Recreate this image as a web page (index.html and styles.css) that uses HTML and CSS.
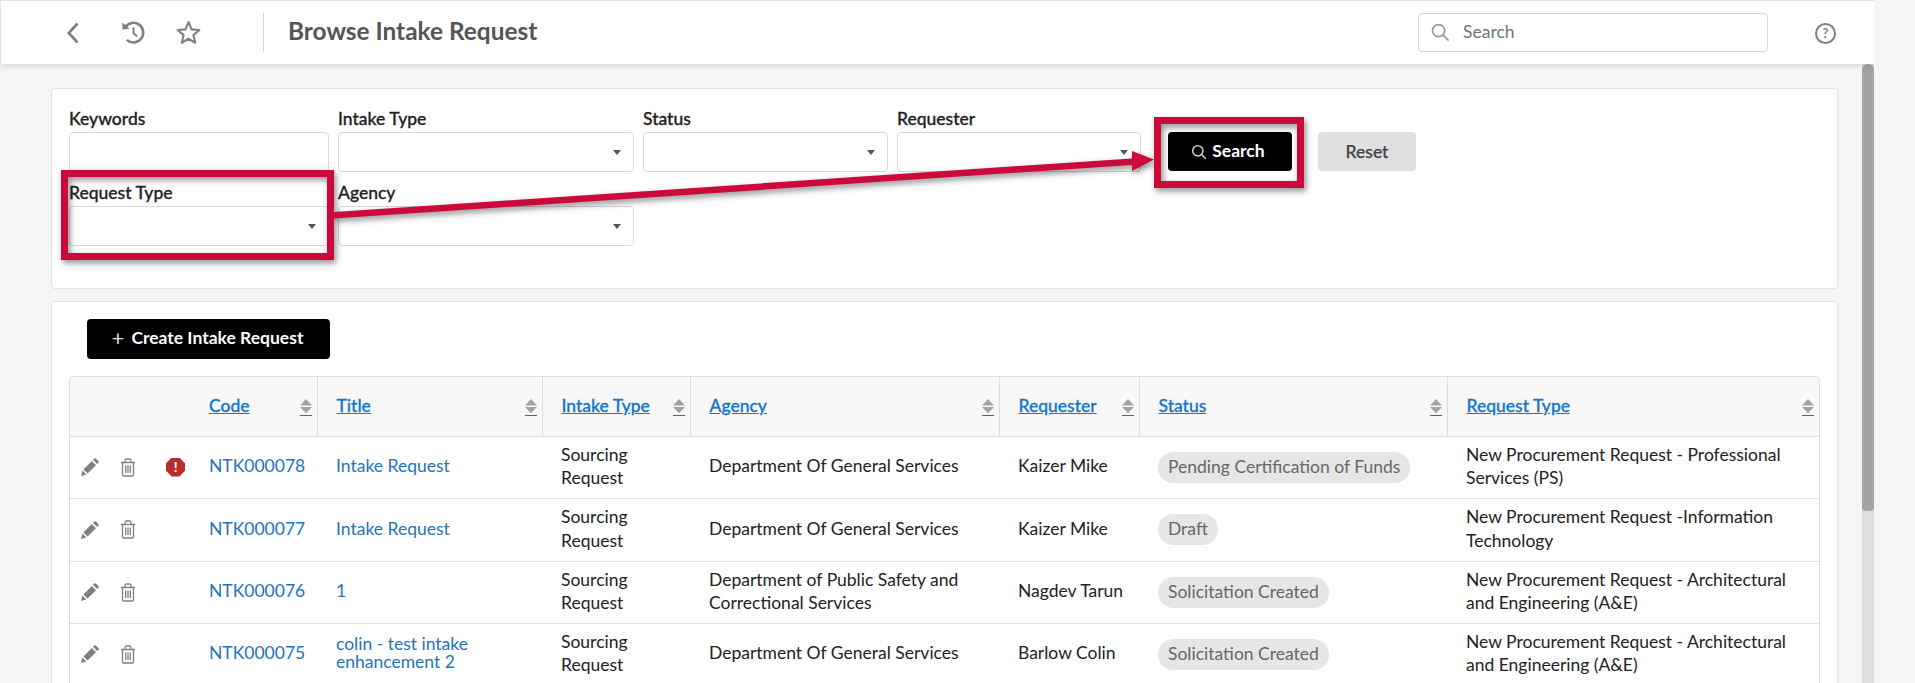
FILE: index.html
```html
<!DOCTYPE html>
<html lang="en">
<head>
<meta charset="utf-8">
<title>Browse Intake Request</title>
<link rel="stylesheet" href="styles.css">
</head>
<body>
<div class="shell">
  <header class="topbar">
    <div class="nav-icons">
      <svg class="ic-back" viewBox="0 0 12 22"><polyline points="10.5,1.5 1.8,11 10.5,20.5"/></svg>
      <svg class="ic-history" viewBox="0 0 26 26"><path class="ln" d="M4.6 7.2A10.2 10.2 0 1 1 6 20.6"/><path class="fl" d="M1.4 2.6L1.6 10 9 9.2Z"/><polyline class="ln thin" points="13,7.5 13,14 17,17"/></svg>
      <svg class="ic-star" viewBox="0 0 24 24"><polygon points="12,2 14.9,9 22.4,9.6 16.7,14.5 18.5,21.9 12,18 5.5,21.9 7.3,14.5 1.6,9.6 9.1,9"/></svg>
    </div>
    <div class="divider"></div>
    <h1 class="page-title">Browse Intake Request</h1>
    <div class="global-search">
      <svg class="ic-mag" viewBox="0 0 20 20"><circle cx="8" cy="8" r="6.4"/><line x1="12.6" y1="12.6" x2="18.6" y2="18.6"/></svg>
      <span class="placeholder">Search</span>
    </div>
    <span class="help">?</span>
  </header>

  <div class="body-row">
    <main class="content">
      <section class="card filters">
        <div class="field"><label>Keywords</label><div class="control"></div></div>
        <div class="field"><label>Intake Type</label><div class="control select"><i class="caret"></i></div></div>
        <div class="field"><label>Status</label><div class="control select"><i class="caret"></i></div></div>
        <div class="field"><label>Requester</label><div class="control select"><i class="caret"></i></div></div>
        <div class="actions">
          <button class="btn btn-dark btn-search"><svg class="ic-mag-sm" viewBox="0 0 20 20"><circle cx="8.5" cy="8.5" r="6.4"/><line x1="13" y1="13" x2="18.5" y2="18.5"/></svg>Search</button>
          <button class="btn btn-light">Reset</button>
        </div>
        <div class="field"><label>Request Type</label><div class="control select"><i class="caret"></i></div></div>
        <div class="field"><label>Agency</label><div class="control select"><i class="caret"></i></div></div>
      </section>

      <section class="card results">
        <button class="btn btn-dark btn-create"><span class="plus">+</span>Create Intake Request</button>
        <div class="table-wrap">
          <table>
            <colgroup>
              <col class="c-icons"><col class="c-code"><col class="c-title"><col class="c-intake"><col class="c-agency"><col class="c-req"><col class="c-status"><col class="c-type">
            </colgroup>
            <thead>
              <tr>
                <th class="blank"></th>
                <th><div class="th-in"><a>Code</a><svg class="sort" viewBox="0 0 12 17"><path d="M6 0L12 6.5H0Z"/><path d="M0 8H12L6 14.2Z"/><rect class="u" y="16" width="12" height="1"/></svg></div></th>
                <th><div class="th-in"><a>Title</a><svg class="sort" viewBox="0 0 12 17"><path d="M6 0L12 6.5H0Z"/><path d="M0 8H12L6 14.2Z"/><rect class="u" y="16" width="12" height="1"/></svg></div></th>
                <th><div class="th-in"><a>Intake Type</a><svg class="sort" viewBox="0 0 12 17"><path d="M6 0L12 6.5H0Z"/><path d="M0 8H12L6 14.2Z"/><rect class="u" y="16" width="12" height="1"/></svg></div></th>
                <th><div class="th-in"><a>Agency</a><svg class="sort" viewBox="0 0 12 17"><path d="M6 0L12 6.5H0Z"/><path d="M0 8H12L6 14.2Z"/><rect class="u" y="16" width="12" height="1"/></svg></div></th>
                <th><div class="th-in"><a>Requester</a><svg class="sort" viewBox="0 0 12 17"><path d="M6 0L12 6.5H0Z"/><path d="M0 8H12L6 14.2Z"/><rect class="u" y="16" width="12" height="1"/></svg></div></th>
                <th><div class="th-in"><a>Status</a><svg class="sort" viewBox="0 0 12 17"><path d="M6 0L12 6.5H0Z"/><path d="M0 8H12L6 14.2Z"/><rect class="u" y="16" width="12" height="1"/></svg></div></th>
                <th class="last"><div class="th-in"><a>Request Type</a><svg class="sort" viewBox="0 0 12 17"><path d="M6 0L12 6.5H0Z"/><path d="M0 8H12L6 14.2Z"/><rect class="u" y="16" width="12" height="1"/></svg></div></th>
              </tr>
            </thead>
            <tbody>
              <tr class="r62">
                <td class="icons"><div class="icon-row">
                  <svg class="ic-pencil" viewBox="0 0 18 18"><path d="M0 18L1.4 12.6 5.4 16.6Z"/><path d="M2.4 11.4L10.8 3 15 7.2 6.6 15.6Z"/><path d="M12 1.8L13.2.6Q14-.2 14.9.6L17.4 3.1Q18.2 4 17.4 4.8L16.2 6Z"/></svg>
                  <svg class="ic-trash" viewBox="0 0 16 19"><path d="M1 4.5H15M5 4.5V2.4Q5 1 6.4 1H9.6Q11 1 11 2.4V4.5M2.5 4.5V16.4Q2.5 18 4 18H12Q13.5 18 13.5 16.4V4.5M5.7 7.5V15M8 7.5V15M10.3 7.5V15"/></svg>
                  <span class="err">!</span>
                </div></td>
                <td><a>NTK000078</a></td>
                <td><a>Intake Request</a></td>
                <td>Sourcing Request</td>
                <td>Department Of General Services</td>
                <td>Kaizer Mike</td>
                <td><span class="pill">Pending Certification of Funds</span></td>
                <td>New Procurement Request - Professional Services (PS)</td>
              </tr>
              <tr class="r63">
                <td class="icons"><div class="icon-row">
                  <svg class="ic-pencil" viewBox="0 0 18 18"><path d="M0 18L1.4 12.6 5.4 16.6Z"/><path d="M2.4 11.4L10.8 3 15 7.2 6.6 15.6Z"/><path d="M12 1.8L13.2.6Q14-.2 14.9.6L17.4 3.1Q18.2 4 17.4 4.8L16.2 6Z"/></svg>
                  <svg class="ic-trash" viewBox="0 0 16 19"><path d="M1 4.5H15M5 4.5V2.4Q5 1 6.4 1H9.6Q11 1 11 2.4V4.5M2.5 4.5V16.4Q2.5 18 4 18H12Q13.5 18 13.5 16.4V4.5M5.7 7.5V15M8 7.5V15M10.3 7.5V15"/></svg>
                </div></td>
                <td><a>NTK000077</a></td>
                <td><a>Intake Request</a></td>
                <td>Sourcing Request</td>
                <td>Department Of General Services</td>
                <td>Kaizer Mike</td>
                <td><span class="pill">Draft</span></td>
                <td>New Procurement Request -Information Technology</td>
              </tr>
              <tr class="r62">
                <td class="icons"><div class="icon-row">
                  <svg class="ic-pencil" viewBox="0 0 18 18"><path d="M0 18L1.4 12.6 5.4 16.6Z"/><path d="M2.4 11.4L10.8 3 15 7.2 6.6 15.6Z"/><path d="M12 1.8L13.2.6Q14-.2 14.9.6L17.4 3.1Q18.2 4 17.4 4.8L16.2 6Z"/></svg>
                  <svg class="ic-trash" viewBox="0 0 16 19"><path d="M1 4.5H15M5 4.5V2.4Q5 1 6.4 1H9.6Q11 1 11 2.4V4.5M2.5 4.5V16.4Q2.5 18 4 18H12Q13.5 18 13.5 16.4V4.5M5.7 7.5V15M8 7.5V15M10.3 7.5V15"/></svg>
                </div></td>
                <td><a>NTK000076</a></td>
                <td><a>1</a></td>
                <td>Sourcing Request</td>
                <td>Department of Public Safety and Correctional Services</td>
                <td>Nagdev Tarun</td>
                <td><span class="pill">Solicitation Created</span></td>
                <td>New Procurement Request - Architectural and Engineering (A&amp;E)</td>
              </tr>
              <tr class="r62">
                <td class="icons"><div class="icon-row">
                  <svg class="ic-pencil" viewBox="0 0 18 18"><path d="M0 18L1.4 12.6 5.4 16.6Z"/><path d="M2.4 11.4L10.8 3 15 7.2 6.6 15.6Z"/><path d="M12 1.8L13.2.6Q14-.2 14.9.6L17.4 3.1Q18.2 4 17.4 4.8L16.2 6Z"/></svg>
                  <svg class="ic-trash" viewBox="0 0 16 19"><path d="M1 4.5H15M5 4.5V2.4Q5 1 6.4 1H9.6Q11 1 11 2.4V4.5M2.5 4.5V16.4Q2.5 18 4 18H12Q13.5 18 13.5 16.4V4.5M5.7 7.5V15M8 7.5V15M10.3 7.5V15"/></svg>
                </div></td>
                <td><a>NTK000075</a></td>
                <td><a class="tight">colin - test intake enhancement 2</a></td>
                <td>Sourcing Request</td>
                <td>Department Of General Services</td>
                <td>Barlow Colin</td>
                <td><span class="pill">Solicitation Created</span></td>
                <td>New Procurement Request - Architectural and Engineering (A&amp;E)</td>
              </tr>
            </tbody>
          </table>
        </div>
      </section>
    </main>
    <div class="scrollbar"><div class="thumb"></div></div>
  </div>
</div>

<svg class="annotations" viewBox="0 0 1915 683" width="1915" height="683">
  <g class="marks">
    <rect x="64.5" y="173.5" width="266" height="83"/>
    <rect x="1157.5" y="120.5" width="143" height="64"/>
    <polygon class="arrow" points="334,212 1132,158.5 1132,151 1154,159.5 1132,171 1132,165 334,218.5"/>
  </g>
</svg>
</body>
</html>
```
FILE: styles.css
```css
* { box-sizing: border-box; }
html, body { margin: 0; height: 683px; overflow: hidden; }
body {
  background: #f5f5f5;
  font-family: Lato, "Open Sans", sans-serif;
  font-size: 17.5px;
  color: #222;
}
.shell { width: 1874px; height: 683px; display: flex; flex-direction: column; overflow: hidden; }

/* top bar */
.topbar {
  position: relative;
  z-index: 2;
  flex: none;
  height: 64px;
  display: flex;
  align-items: center;
  background: #fff;
  border-top: 1px solid #e3e3e3;
  border-left: 1px solid #e3e3e3;
  box-shadow: 0 2px 6px rgba(0, 0, 0, .13);
}
.nav-icons { display: flex; align-items: center; width: 262px; padding-left: 66px; }
.ic-back { width: 12px; height: 22px; margin-right: 42px; }
.ic-back polyline { fill: none; stroke: #7f7f7f; stroke-width: 2.6; }
.ic-history { width: 25px; height: 25px; margin-right: 30px; }
.ic-history .ln { fill: none; stroke: #7f7f7f; stroke-width: 2.6; }
.ic-history .thin { stroke-width: 2; }
.ic-history .fl { fill: #7f7f7f; }
.ic-star { width: 25px; height: 25px; }
.ic-star polygon { fill: none; stroke: #7f7f7f; stroke-width: 2; stroke-linejoin: round; }
.divider { width: 1px; height: 39px; background: #d4d4d4; }
.page-title { margin: 0 0 0 24px; flex: 1; font-size: 24.4px; font-weight: 700; color: #555; line-height: 30px; position: relative; top: -2px; }
.global-search {
  width: 350px;
  height: 39px;
  display: flex;
  align-items: center;
  padding-left: 12px;
  border: 1px solid #d6d6d6;
  border-radius: 4px;
  margin-right: 47px;
}
.ic-mag { width: 19px; height: 19px; margin-right: 13px; }
.ic-mag circle, .ic-mag line { fill: none; stroke: #999; stroke-width: 1.8; }
.placeholder { color: #6c757d; position: relative; top: -1px; }
.help {
  width: 21px;
  height: 21px;
  margin-right: 38px;
  border: 2px solid #7f7f7f;
  border-radius: 50%;
  color: #7f7f7f;
  font-size: 13px;
  font-weight: 700;
  line-height: 17px;
  text-align: center;
  position: relative;
  top: 1px;
}

/* body */
.body-row { flex: 1; min-height: 0; display: flex; }
.content { flex: 1; min-width: 0; padding: 24px 24px 0 51px; overflow: hidden; }
.scrollbar { width: 12px; background: #dedede; flex: none; }
.thumb { height: 447px; background: #a4a4a4; border-radius: 6px 6px 4px 4px; }

.card { background: #fff; border: 1px solid #e2e2e2; border-radius: 4px; }

/* filters */
.filters {
  height: 201px;
  padding: 21px 0 0 17px;
  display: grid;
  grid-template-columns: 260px 296px 245px 244px auto;
  grid-auto-rows: 74px;
  column-gap: 9px;
  justify-content: start;
}
.field label { display: block; height: 22px; line-height: 18px; font-weight: 500; color: #222; -webkit-text-stroke: .3px #222; }
.control { height: 40px; border: 1px solid #d8d8d8; border-radius: 4px; background: #fff; }
.select { display: flex; align-items: center; justify-content: flex-end; padding-right: 12px; }
.caret { width: 0; height: 0; border: 4.5px solid transparent; border-top: 5px solid #555; border-bottom: 0; }
.actions { display: flex; align-items: flex-start; padding: 22px 0 0 18px; gap: 26px; }

.btn {
  font-family: inherit;
  font-size: 17.5px;
  border: 0;
  border-radius: 4px;
  padding: 0;
  display: flex;
  align-items: center;
  justify-content: center;
  height: 39px;
}
.btn-dark { background: #000; color: #fff; font-weight: 700; }
.btn-light { background: #dfe0e2; color: #444; font-weight: 500; width: 98px; padding-bottom: 1px; -webkit-text-stroke: .25px #444; }
.btn-search { width: 124px; padding: 0 4px 2px 0; }
.ic-mag-sm { width: 16px; height: 16px; margin-right: 5px; position: relative; top: 1px; }
.ic-mag-sm circle, .ic-mag-sm line { fill: none; stroke: #c4c4c4; stroke-width: 2; }

/* results */
.results { margin-top: 12px; height: 421px; padding: 17px 0 0 17px; }
.btn-create { width: 243px; height: 40px; margin-left: 18px; padding: 0 2px 3px 0; }
.plus { font-weight: 400; font-size: 22px; color: #ddd; margin-right: 7px; line-height: 20px; }
.table-wrap {
  margin-top: 17px;
  width: 1751px;
  border: 1px solid #dcdcdc;
  border-bottom: 0;
  border-radius: 5px 5px 0 0;
  overflow: hidden;
}
table { width: 100%; border-collapse: collapse; table-layout: fixed; }
.c-icons { width: 120px; }
.c-code { width: 127px; }
.c-title { width: 225px; }
.c-intake { width: 148px; }
.c-agency { width: 309px; }
.c-req { width: 140px; }
.c-status { width: 308px; }
th {
  height: 59px;
  padding: 0 5px 0 19px;
  background: #f8f8f8;
  border-bottom: 1px solid #dcdcdc;
  border-right: 1px solid #dcdcdc;
  text-align: left;
  font-weight: 500;
}
th.blank { border-right: 0; }
th.last { border-right: 0; }
.th-in { display: flex; justify-content: space-between; align-items: center; }
th a { color: #1377c9; text-decoration: underline; font-weight: 500; position: relative; top: -1px; -webkit-text-stroke: .3px #1377c9; }
.sort { width: 12px; height: 17px; position: relative; top: 1px; }
.sort path { fill: #a3a3a3; }
.sort .u { fill: #1377c9; }
td {
  padding: 0 10px 2px 19px;
  border-bottom: 1px solid #e2e2e2;
  line-height: 23.5px;
  vertical-align: middle;
}
.r62 td { height: 62px; }
.r63 td { height: 63px; }
td a { color: #1f75b8; }
td a.tight { display: block; line-height: 18px; width: 170px; }
td.icons { padding: 0 0 0 11px; }
.icon-row { display: flex; align-items: center; height: 20px; }
.ic-pencil { width: 18px; height: 18px; fill: #808080; margin-right: 21px; }
.ic-trash { width: 16px; height: 19px; fill: none; stroke: #808080; stroke-width: 1.3; margin-right: 30px; }
.err {
  width: 19px;
  height: 19px;
  background: #b92c2c;
  color: #fff;
  font-size: 13px;
  font-weight: 900;
  line-height: 19px;
  text-align: center;
  clip-path: polygon(30% 0, 70% 0, 100% 30%, 100% 70%, 70% 100%, 30% 100%, 0 70%, 0 30%);
}
.pill {
  display: inline-block;
  height: 31px;
  line-height: 29px;
  padding: 0 10px;
  border-radius: 16px;
  background: #e6e6e6;
  color: #666;
  position: relative;
  top: 1px;
}

/* annotations over the page */
.annotations { position: absolute; left: 0; top: 0; z-index: 5; pointer-events: none; }
.marks { filter: drop-shadow(2px 3px 3px rgba(0, 0, 0, .45)); }
.marks rect { fill: none; stroke: #cb0a3a; stroke-width: 7; }
.marks .arrow { fill: #cb0a3a; }
```
